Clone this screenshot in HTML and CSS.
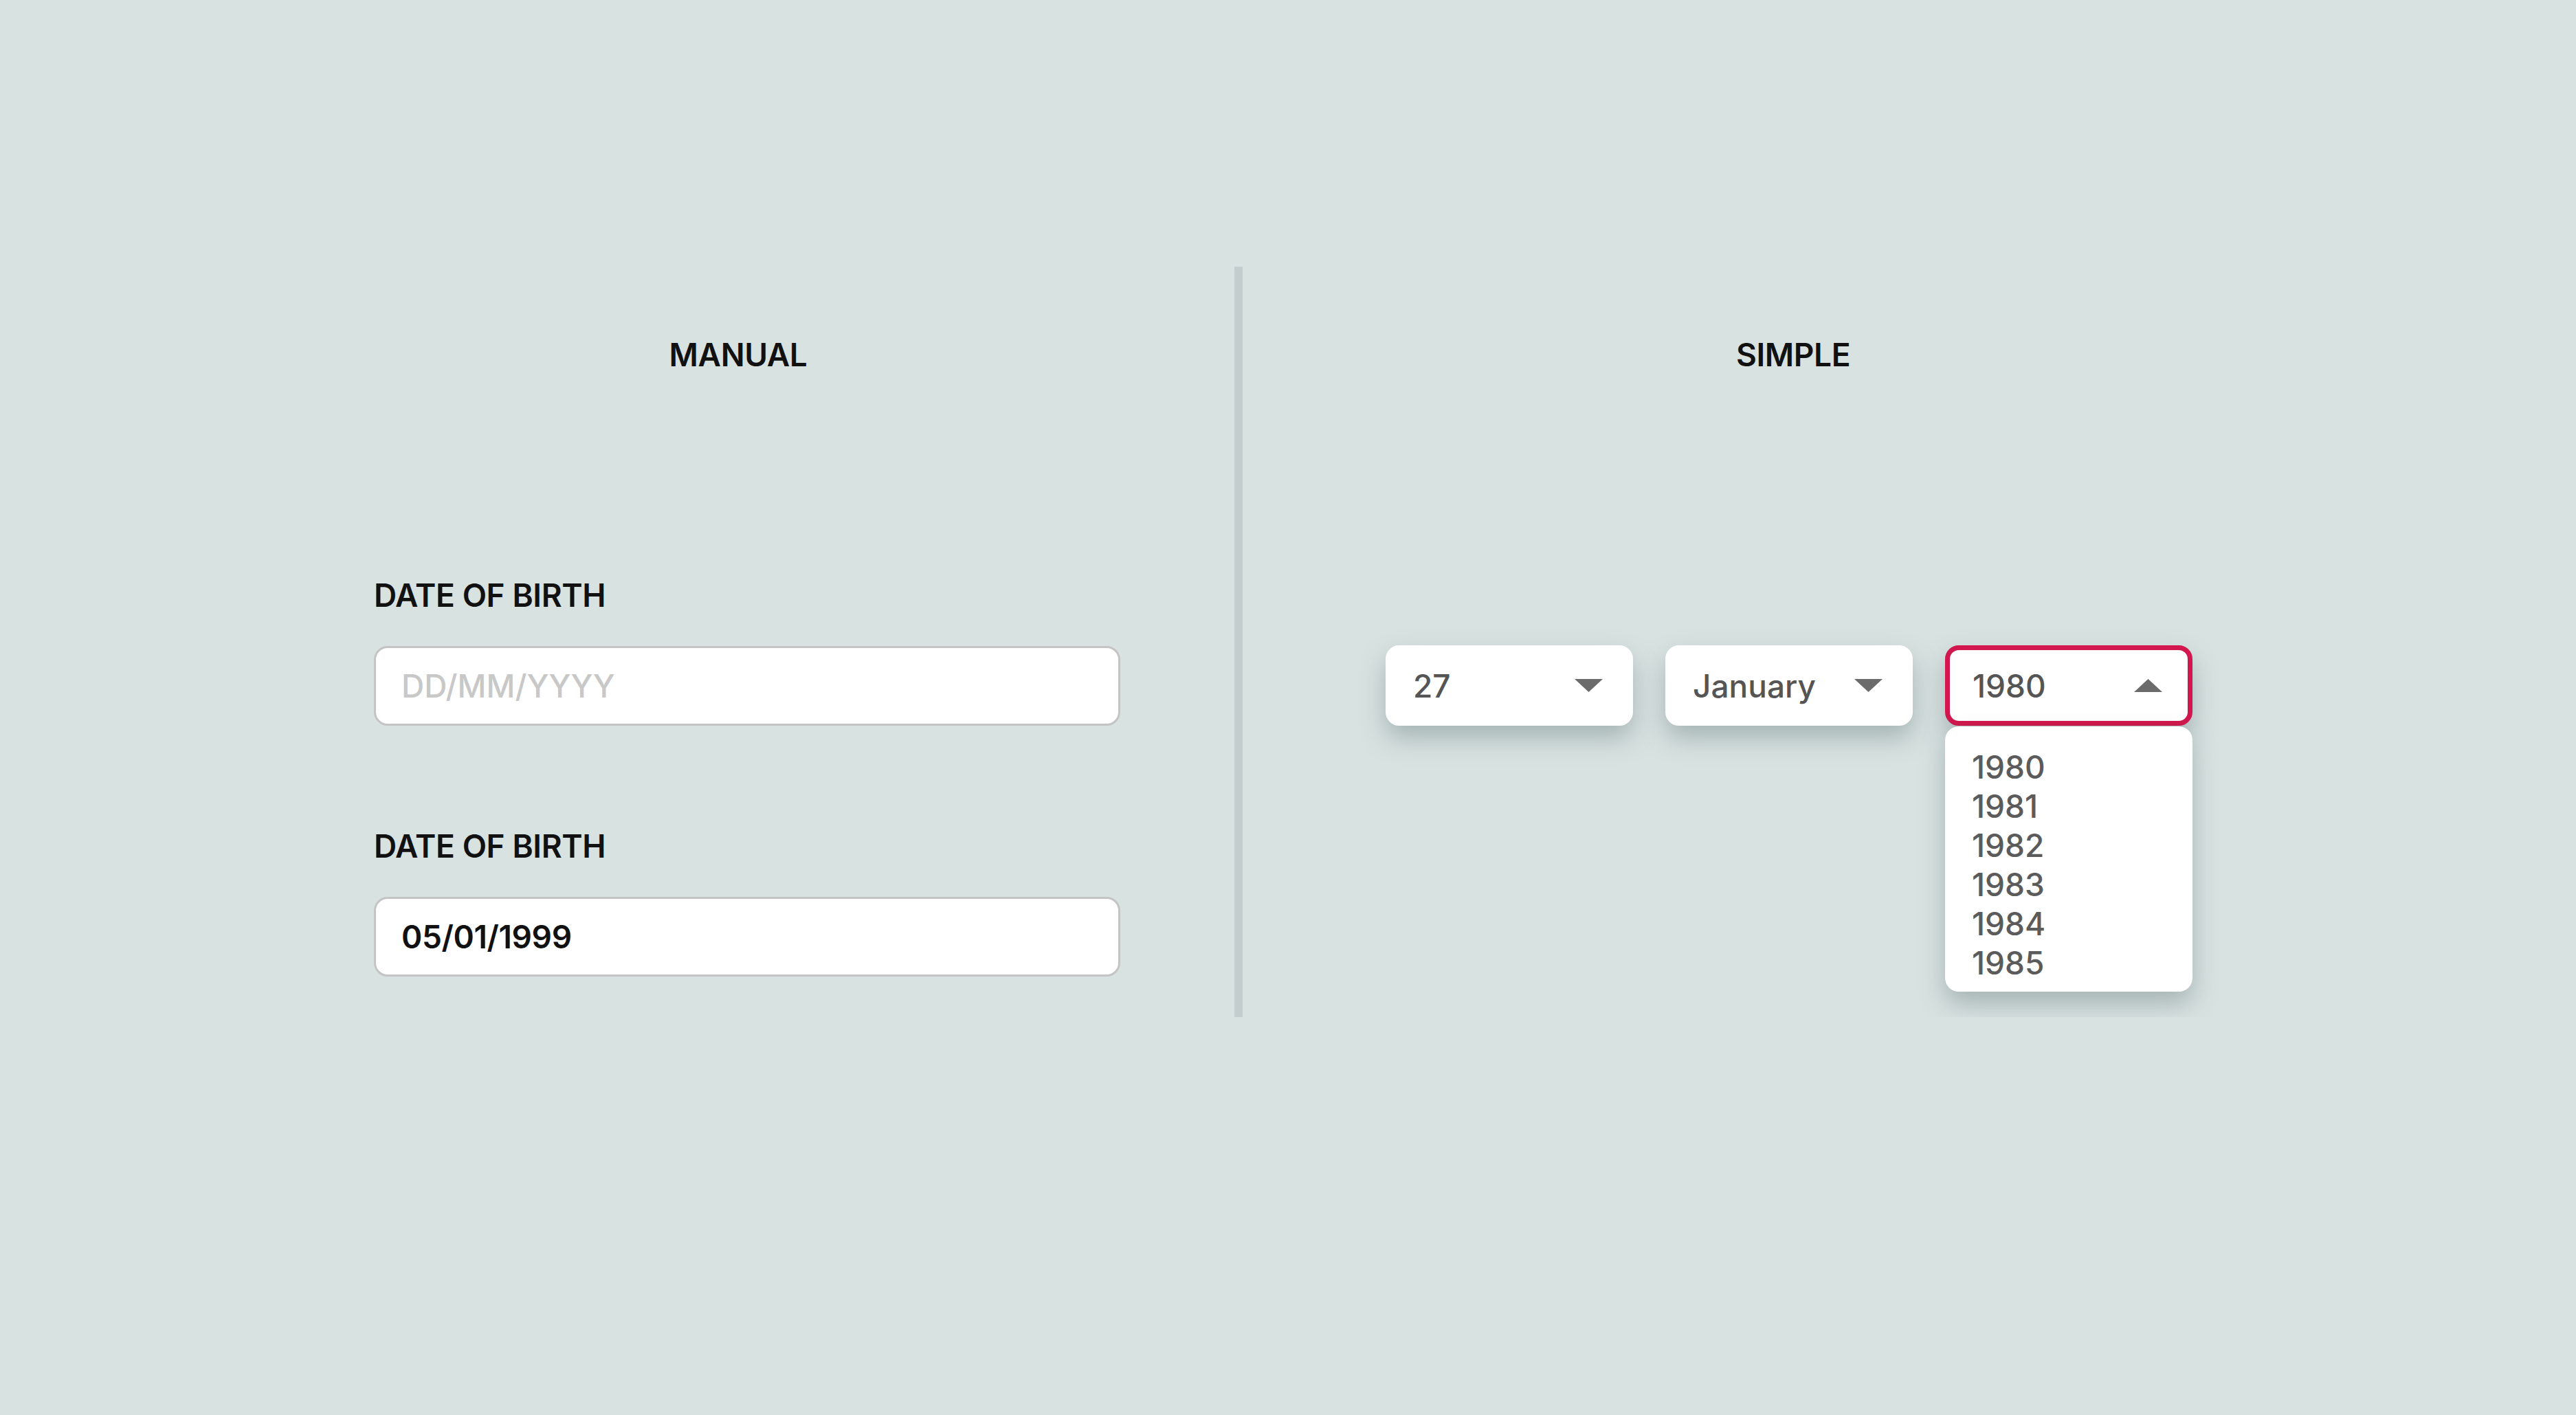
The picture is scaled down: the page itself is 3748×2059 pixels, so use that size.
FILE: index.html
```html
<!DOCTYPE html>
<html lang="en">
<head>
    <meta charset="UTF-8">
    <meta name="viewport" content="width=device-width, initial-scale=1.0">
    <title>Date of Birth Inputs</title>
    <link rel="stylesheet" href="styles.css">
</head>
<body>
    <main class="page">
        <!-- Manual entry column -->
        <section class="col col-manual">
            <h2 class="col-title">MANUAL</h2>

            <div class="field field-first">
                <label class="field-label" for="dobEmpty">DATE OF BIRTH</label>
                <input class="field-input" id="dobEmpty" type="text" placeholder="DD/MM/YYYY">
            </div>

            <div class="field field-second">
                <label class="field-label" for="dobFilled">DATE OF BIRTH</label>
                <input class="field-input field-filled" id="dobFilled" type="text" value="05/01/1999">
            </div>
        </section>

        <div class="divider"></div>

        <!-- Simple select column -->
        <section class="col col-simple">
            <h2 class="col-title">SIMPLE</h2>

            <div class="selects">
                <div class="select-wrap">
                    <div class="select">
                        <span>27</span>
                        <svg class="caret" width="41" height="19" viewBox="0 0 41 19"><polygon points="0,0 41,0 20.5,19"/></svg>
                    </div>
                </div>

                <div class="select-wrap">
                    <div class="select">
                        <span>January</span>
                        <svg class="caret" width="41" height="19" viewBox="0 0 41 19"><polygon points="0,0 41,0 20.5,19"/></svg>
                    </div>
                </div>

                <div class="select-wrap">
                    <div class="select select-open">
                        <span>1980</span>
                        <svg class="caret" width="41" height="19" viewBox="0 0 41 19"><polygon points="20.5,0 41,19 0,19"/></svg>
                    </div>
                    <!-- Open options list -->
                    <ul class="options">
                        <li>1980</li>
                        <li>1981</li>
                        <li>1982</li>
                        <li>1983</li>
                        <li>1984</li>
                        <li>1985</li>
                    </ul>
                </div>
            </div>
        </section>
    </main>
</body>
</html>
```

FILE: styles.css
```css
/* Page base */
body {
    margin: 0;
    background-color: #d8e2e1;
    font-family: Inter, "Noto Sans", sans-serif;
    color: #111;
}

.page {
    display: flex;
    align-items: flex-start;
    padding: 388px 0 0 352px;
}

.col-manual {
    width: 1444px;
}

.col-simple {
    width: 1602px;
}

.col-title {
    margin: 0;
    padding-top: 105px;
    font-size: 46px;
    line-height: 46px;
    font-weight: 600;
    letter-spacing: -0.4px;
    text-align: center;
}

.divider {
    width: 12px;
    height: 1092px;
    background-color: #c3cdce;
}

/* Manual inputs */
.field {
    padding-left: 192px;
}

.field-first {
    margin-top: 304px;
}

.field-second {
    margin-top: 152px;
}

.field-label {
    display: block;
    font-size: 46px;
    line-height: 46px;
    font-weight: 600;
    letter-spacing: -0.4px;
    margin-bottom: 51px;
}

.field-input {
    box-sizing: border-box;
    display: block;
    width: 1086px;
    height: 116px;
    padding: 0 37px;
    border: 3px solid #c4c4c4;
    border-radius: 20px;
    background-color: #fff;
    font-family: Inter, "Noto Sans", sans-serif;
    font-size: 46px;
    font-weight: 500;
    color: #111;
    outline: none;
}

.field-input::placeholder {
    color: #c8c8c8;
}

.field-filled {
    font-weight: 600;
    letter-spacing: -0.4px;
}

/* Simple selects */
.selects {
    display: flex;
    gap: 47px;
    margin-top: 400px;
    padding-left: 208px;
}

.select-wrap {
    position: relative;
}

.select {
    box-sizing: border-box;
    display: flex;
    align-items: center;
    justify-content: space-between;
    width: 360px;
    height: 117px;
    padding: 0 37px 0 33px;
    border: 7px solid #fff;
    border-radius: 20px;
    background-color: #fff;
    box-shadow: 0 18px 36px rgba(70, 95, 95, 0.34);
    font-size: 46px;
    font-weight: 500;
    color: #555;
}

.select-open {
    border-color: #d1174e;
}

.caret {
    fill: #6b6b6b;
}

/* Options list under the open select */
.options {
    position: absolute;
    top: calc(100% + 1px);
    left: 0;
    box-sizing: border-box;
    width: 360px;
    margin: 0;
    padding: 31px 0 13px 39px;
    list-style: none;
    background-color: #fff;
    border-radius: 20px;
    box-shadow: 0 18px 36px rgba(70, 95, 95, 0.34);
    font-size: 46px;
    line-height: 57px;
    font-weight: 500;
    color: #5b5b5b;
}
```
